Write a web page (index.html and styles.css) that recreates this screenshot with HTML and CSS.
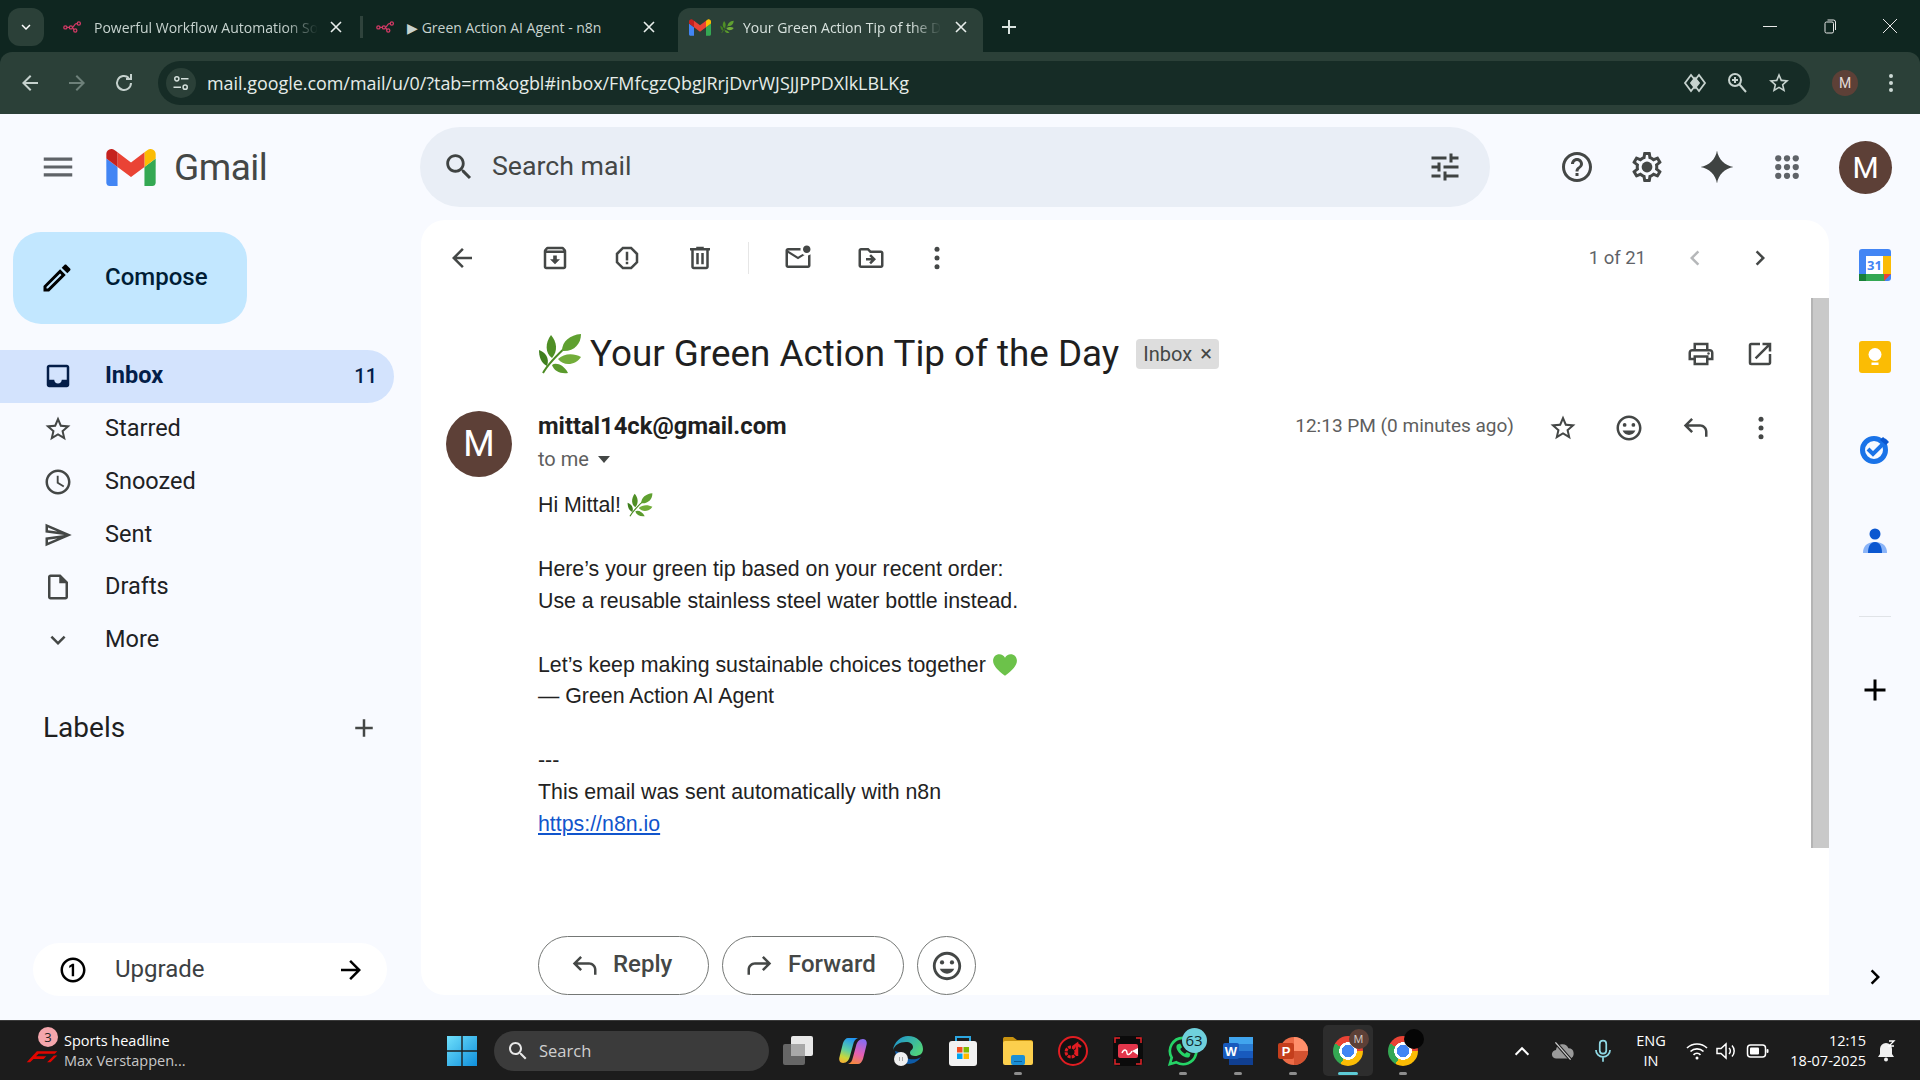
FILE: index.html
```html
<!DOCTYPE html>
<html lang="en">
<head>
    <meta charset="UTF-8">
    <meta name="viewport" content="width=device-width, initial-scale=1.0">
    <title>Your Green Action Tip of the Day - Gmail</title>
    <link rel="stylesheet" href="styles.css">
</head>
<body>

<svg class="sprite" xmlns="http://www.w3.org/2000/svg">
    <symbol id="i-menu" viewBox="0 0 24 24"><path d="M3 18h18v-2H3v2zm0-5h18v-2H3v2zm0-7v2h18V6H3z"/></symbol>
    <symbol id="i-search" viewBox="0 0 24 24"><path d="M15.5 14h-.79l-.28-.27C15.41 12.59 16 11.11 16 9.5 16 5.91 13.09 3 9.5 3S3 5.91 3 9.5 5.91 16 9.5 16c1.61 0 3.09-.59 4.23-1.57l.27.28v.79l5 4.99L20.49 19l-4.99-5zm-6 0C7.01 14 5 11.99 5 9.5S7.01 5 9.5 5 14 7.01 14 9.5 11.99 14 9.5 14z"/></symbol>
    <symbol id="i-tune" viewBox="0 0 24 24"><path d="M3 17v2h6v-2H3zM3 5v2h10V5H3zm10 16v-2h8v-2h-8v-2h-2v6h2zM7 9v2H3v2h4v2h2V9H7zm14 4v-2H11v2h10zm-6-4h2V7h4V5h-4V3h-2v6z"/></symbol>
    <symbol id="i-help" viewBox="0 0 24 24"><path d="M11 18h2v-2h-2v2zm1-16C6.48 2 2 6.48 2 12s4.48 10 10 10 10-4.48 10-10S17.52 2 12 2zm0 18c-4.41 0-8-3.59-8-8s3.59-8 8-8 8 3.59 8 8-3.59 8-8 8zm0-14c-2.21 0-4 1.79-4 4h2c0-1.1.9-2 2-2s2 .9 2 2c0 2-3 1.75-3 5h2c0-2.25 3-2.5 3-5 0-2.21-1.79-4-4-4z"/></symbol>
    <symbol id="i-gear" viewBox="0 0 24 24"><path d="M19.43 12.98c.04-.32.07-.64.07-.98 0-.34-.03-.66-.07-.98l2.11-1.65c.19-.15.24-.42.12-.64l-2-3.46c-.09-.16-.26-.25-.44-.25-.06 0-.12.01-.17.03l-2.49 1c-.52-.4-1.08-.73-1.69-.98l-.38-2.65C14.46 2.18 14.25 2 14 2h-4c-.25 0-.46.18-.49.42l-.38 2.65c-.61.25-1.17.59-1.69.98l-2.49-1c-.06-.02-.12-.03-.18-.03-.17 0-.34.09-.43.25l-2 3.46c-.13.22-.07.49.12.64l2.11 1.65c-.04.32-.07.65-.07.98 0 .33.03.66.07.98l-2.11 1.65c-.19.15-.24.42-.12.64l2 3.46c.09.16.26.25.44.25.06 0 .12-.01.17-.03l2.49-1c.52.4 1.08.73 1.69.98l.38 2.65c.03.24.24.42.49.42h4c.25 0 .46-.18.49-.42l.38-2.65c.61-.25 1.17-.59 1.69-.98l2.49 1c.06.02.12.03.18.03.17 0 .34-.09.43-.25l2-3.46c.12-.22.07-.49-.12-.64l-2.11-1.65zm-1.98-1.71c.04.31.05.52.05.73 0 .21-.02.43-.05.73l-.14 1.13.89.7 1.08.84-.7 1.21-1.27-.51-1.04-.42-.9.68c-.43.32-.84.56-1.25.73l-1.06.43-.16 1.13-.2 1.35h-1.4l-.19-1.35-.16-1.13-1.06-.43c-.43-.18-.83-.41-1.23-.71l-.91-.7-1.06.43-1.27.51-.7-1.21 1.08-.84.89-.7-.14-1.13c-.03-.31-.05-.54-.05-.74s.02-.43.05-.73l.14-1.13-.89-.7-1.08-.84.7-1.21 1.27.51 1.04.42.9-.68c.43-.32.84-.56 1.25-.73l1.06-.43.16-1.13.2-1.35h1.39l.19 1.35.16 1.13 1.06.43c.43.18.83.41 1.23.71l.91.7 1.06-.43 1.27-.51.7 1.21-1.07.85-.89.7.14 1.13z"/><circle cx="12" cy="12" r="3.6"/></symbol>
    <symbol id="i-spark" viewBox="0 0 24 24"><path d="M12 1C12.900 6.800 17.200 11.100 23 12 17.200 12.900 12.900 17.200 12 23 11.100 17.200 6.800 12.900 1 12 6.800 11.100 11.100 6.800 12 1z"/></symbol>
    <symbol id="i-apps" viewBox="0 0 24 24"><circle cx="5" cy="5" r="2.5"/><circle cx="12" cy="5" r="2.5"/><circle cx="19" cy="5" r="2.5"/><circle cx="5" cy="12" r="2.5"/><circle cx="12" cy="12" r="2.5"/><circle cx="19" cy="12" r="2.5"/><circle cx="5" cy="19" r="2.5"/><circle cx="12" cy="19" r="2.5"/><circle cx="19" cy="19" r="2.5"/></symbol>
    <symbol id="i-pencil" viewBox="0 0 24 24"><path d="M14.06 9.02l.92.92L5.92 19H5v-.92l9.06-9.06M17.66 3c-.25 0-.51.1-.7.29l-1.83 1.83 3.75 3.75 1.83-1.83c.39-.39.39-1.02 0-1.41l-2.34-2.34c-.2-.2-.45-.29-.71-.29zm-3.6 3.19L3 17.25V21h3.75L17.81 9.94l-3.75-3.75z"/></symbol>
    <symbol id="i-inbox" viewBox="0 0 24 24"><path d="M19 3H5c-1.1 0-2 .9-2 2v14c0 1.1.9 2 2 2h14c1.1 0 2-.9 2-2V5c0-1.1-.9-2-2-2zm0 12h-4c0 1.66-1.35 3-3 3s-3-1.34-3-3H4.99V5H19v10z"/></symbol>
    <symbol id="i-star" viewBox="0 0 24 24"><path d="M22 9.24l-7.19-.62L12 2 9.19 8.63 2 9.24l5.46 4.73L5.82 21 12 17.27 18.18 21l-1.63-7.03L22 9.24zM12 15.4l-3.76 2.27 1-4.28-3.32-2.88 4.38-.38L12 6.1l1.71 4.04 4.38.38-3.32 2.88 1 4.28L12 15.4z"/></symbol>
    <symbol id="i-clock" viewBox="0 0 24 24"><path d="M11.99 2C6.47 2 2 6.48 2 12s4.47 10 9.99 10C17.52 22 22 17.52 22 12S17.52 2 11.99 2zM12 20c-4.42 0-8-3.58-8-8s3.58-8 8-8 8 3.58 8 8-3.58 8-8 8zm.5-13H11v6l5.25 3.15.75-1.23-4.5-2.67z"/></symbol>
    <symbol id="i-send" viewBox="0 0 24 24"><path d="M4.01 6.03l7.51 3.22-7.52-1 .01-2.22m7.5 8.72L4 17.97v-2.22l7.51-1M2.01 3L2 10l15 2-15 2 .01 7L23 12 2.01 3z"/></symbol>
    <symbol id="i-draft" viewBox="0 0 24 24"><path d="M14 2H6c-1.1 0-1.99.9-1.99 2L4 20c0 1.1.89 2 1.99 2H18c1.1 0 2-.9 2-2V8l-6-6zM6 20V4h7v5h5v11H6z"/></symbol>
    <symbol id="i-down" viewBox="0 0 24 24"><path d="M16.59 8.59L12 13.17 7.41 8.59 6 10l6 6 6-6z"/></symbol>
    <symbol id="i-add" viewBox="0 0 24 24"><path d="M19 13h-6v6h-2v-6H5v-2h6V5h2v6h6v2z"/></symbol>
    <symbol id="i-back" viewBox="0 0 24 24"><path d="M20 11H7.83l5.59-5.59L12 4l-8 8 8 8 1.41-1.41L7.83 13H20v-2z"/></symbol>
    <symbol id="i-forward" viewBox="0 0 24 24"><path d="M12 4l-1.41 1.41L16.17 11H4v2h12.17l-5.58 5.59L12 20l8-8z"/></symbol>
    <symbol id="i-archive" viewBox="0 0 24 24"><path d="M20.54 5.23l-1.39-1.68C18.88 3.21 18.47 3 18 3H6c-.47 0-.88.21-1.16.55L3.46 5.23C3.17 5.57 3 6.02 3 6.5V19c0 1.1.9 2 2 2h14c1.1 0 2-.9 2-2V6.5c0-.48-.17-.93-.46-1.27zM6.24 5h11.52l.83 1H5.42l.82-1zM5 19V8h14v11H5zm8.45-9h-2.9v3H8l4 4 4-4h-2.55z"/></symbol>
    <symbol id="i-report" viewBox="0 0 24 24"><path d="M15.73 3H8.27L3 8.27v7.46L8.27 21h7.46L21 15.73V8.27L15.73 3zM19 14.9L14.9 19H9.1L5 14.9V9.1L9.1 5h5.8L19 9.1v5.8zM11 7h2v7h-2zM11 15h2v2h-2z"/></symbol>
    <symbol id="i-delete" viewBox="0 0 24 24"><path d="M15 4V3H9v1H4v2h1v13c0 1.1.9 2 2 2h10c1.1 0 2-.9 2-2V6h1V4h-5zm2 15H7V6h10v13zM9 8h2v9H9zm4 0h2v9h-2z"/></symbol>
    <symbol id="i-unread" viewBox="0 0 24 24"><path d="M22 8.98V18c0 1.1-.9 2-2 2H4c-1.1 0-2-.9-2-2V6c0-1.1.9-2 2-2h10.1c-.06.32-.1.66-.1 1 0 .34.04.68.1 1H4l8 5 3.67-2.29c.47.43 1.02.76 1.63.98L12 13 4 8v10h16V9.9c.74-.15 1.42-.48 2-.92zM16 5c0 1.66 1.34 3 3 3s3-1.34 3-3-1.34-3-3-3-3 1.34-3 3z"/></symbol>
    <symbol id="i-move" viewBox="0 0 24 24"><path d="M20 6h-8l-2-2H4c-1.1 0-1.99.9-1.99 2L2 18c0 1.1.9 2 2 2h16c1.1 0 2-.9 2-2V8c0-1.1-.9-2-2-2zm0 12H4V6h5.17l2 2H20v10zm-8.01-9l-1.41 1.41L12.16 12H8v2h4.16l-1.59 1.59L11.99 17 16 13.01 11.99 9z"/></symbol>
    <symbol id="i-more" viewBox="0 0 24 24"><circle cx="12" cy="5" r="2"/><circle cx="12" cy="12" r="2"/><circle cx="12" cy="19" r="2"/></symbol>
    <symbol id="i-left" viewBox="0 0 24 24"><path d="M15.41 7.41L14 6l-6 6 6 6 1.41-1.41L10.83 12z"/></symbol>
    <symbol id="i-right" viewBox="0 0 24 24"><path d="M10 6L8.59 7.41 13.17 12l-4.58 4.59L10 18l6-6z"/></symbol>
    <symbol id="i-print" viewBox="0 0 24 24"><path d="M19 8h-1V3H6v5H5c-1.66 0-3 1.34-3 3v6h4v4h12v-4h4v-6c0-1.66-1.34-3-3-3zM8 5h8v3H8V5zm8 12v2H8v-4h8v2zm2-2v-2H6v2H4v-4c0-.55.45-1 1-1h14c.55 0 1 .45 1 1v4h-2z"/><circle cx="18" cy="11.5" r="1"/></symbol>
    <symbol id="i-open" viewBox="0 0 24 24"><path d="M19 19H5V5h7V3H5a2 2 0 0 0-2 2v14a2 2 0 0 0 2 2h14c1.1 0 2-.9 2-2v-7h-2v7zM14 3v2h3.59l-9.83 9.83 1.41 1.41L19 6.41V10h2V3h-7z"/></symbol>
    <symbol id="i-smile" viewBox="0 0 24 24"><path d="M12 2C6.47 2 2 6.5 2 12s4.47 10 10 10 10-4.5 10-10S17.53 2 12 2zm0 18c-4.42 0-8-3.58-8-8s3.58-8 8-8 8 3.58 8 8-3.58 8-8 8z"/><circle cx="8.5" cy="9.5" r="1.5"/><circle cx="15.5" cy="9.5" r="1.5"/><path d="M12 17.5c2.33 0 4.3-1.46 5.11-3.5H6.89c.8 2.04 2.78 3.5 5.11 3.5z"/></symbol>
    <symbol id="i-reply" viewBox="0 0 24 24"><path d="M20 19v-4c0-2.21-1.79-4-4-4H6.83l3.59 3.59L9 16l-6-6 6-6 1.41 1.41L6.83 9H16c3.31 0 6 2.69 6 6v4h-2z"/></symbol>
    <symbol id="i-fwd" viewBox="0 0 24 24"><path d="M4 19v-4c0-2.21 1.79-4 4-4h9.17l-3.59 3.59L15 16l6-6-6-6-1.41 1.41L17.17 9H8c-3.31 0-6 2.69-6 6v4h2z"/></symbol>
    <symbol id="i-caret" viewBox="0 0 24 24"><path d="M6 9l6 7 6-7z"/></symbol>
    <symbol id="i-one" viewBox="0 0 24 24"><path d="M12 2C6.48 2 2 6.48 2 12s4.48 10 10 10 10-4.48 10-10S17.52 2 12 2zm0 18c-4.41 0-8-3.59-8-8s3.59-8 8-8 8 3.59 8 8-3.59 8-8 8z"/><path d="M12.9 7h-1.5L9 8.6v1.7l2-1.1V17h1.9z"/></symbol>
    <symbol id="i-herb" viewBox="0 0 44 42">
        <path d="M5 40C10 31 18 23 30 12" fill="none" stroke="#4b8a22" stroke-width="2"/>
        <path fill="#5fa030" d="M24 18C24 8 32 2 43 1 43 11 36 19 24 18z"/>
        <path fill="#4f8f25" d="M14 25C7 20 7 10 13 2 19 9 20 18 14 25z"/>
        <path fill="#72ad3a" d="M20 26C26 20 36 20 43 24 38 32 26 34 20 26z"/>
        <path fill="#3f7f1e" d="M9 33C3 30 1 24 1 17 7 19 12 25 9 33z"/>
        <path fill="#5a9a2c" d="M14 32C18 29 26 32 30 40 22 41 16 38 14 32z"/>
    </symbol>
    <symbol id="i-n8n" viewBox="0 0 24 16">
        <g fill="none" stroke="#d43a66" stroke-width="1.6">
            <circle cx="3" cy="8.5" r="2"/><circle cx="10" cy="8.5" r="2"/><circle cx="15.5" cy="12.5" r="2"/><circle cx="20" cy="3.5" r="2"/>
            <path d="M5 8.5h3M12 8.5c2 0 1.5-5 6-5M12 8.5c1 0 1 2.5 1.8 3"/>
        </g>
    </symbol>
    <symbol id="i-gmail" viewBox="52 42 88 66">
        <path fill="#4285f4" d="M58 108h14V74L52 59v43c0 3.32 2.69 6 6 6"/>
        <path fill="#34a853" d="M120 108h14c3.32 0 6-2.69 6-6V59l-20 15"/>
        <path fill="#fbbc04" d="M120 48v26l20-15v-8c0-7.42-8.47-11.65-14.4-7.2"/>
        <path fill="#ea4335" d="M72 74V48l24 18 24-18v26L96 92"/>
        <path fill="#c5221f" d="M52 51v8l20 15V48l-5.6-4.2c-5.94-4.45-14.4-.22-14.4 7.2"/>
    </symbol>
</svg>

<!-- browser chrome -->
<div class="tabstrip">
    <button class="tab-list"><svg class="ic ic-18"><use href="#i-down"/></svg></button>
    <div class="tab tab-one">
        <svg class="favicon"><use href="#i-n8n"/></svg>
        <span class="tab-title">Powerful Workflow Automation So</span>
        <svg class="tab-close" viewBox="0 0 14 14"><path d="M2 2l10 10M12 2L2 12"/></svg>
    </div>
    <div class="tab-sep"></div>
    <div class="tab tab-two">
        <svg class="favicon"><use href="#i-n8n"/></svg>
        <span class="tab-title">▶ Green Action AI Agent - n8n</span>
        <svg class="tab-close" viewBox="0 0 14 14"><path d="M2 2l10 10M12 2L2 12"/></svg>
    </div>
    <div class="tab tab-active">
        <svg class="tab-gmail"><use href="#i-gmail"/></svg>
        <svg class="tab-herb"><use href="#i-herb"/></svg>
        <span class="tab-title">Your Green Action Tip of the D</span>
        <svg class="tab-close" viewBox="0 0 14 14"><path d="M2 2l10 10M12 2L2 12"/></svg>
    </div>
    <svg class="ic ic-24 new-tab"><use href="#i-add"/></svg>
    <div class="window-btns">
        <svg viewBox="0 0 16 16"><path d="M1 8.500h14"/></svg>
        <svg viewBox="0 0 16 16"><rect x="3" y="4" width="8.500" height="11" rx="1.500"/><path d="M5.500 2h6a2 2 0 0 1 2 2v8"/></svg>
        <svg viewBox="0 0 16 16"><path d="M1 1l14 14M15 1L1 15"/></svg>
    </div>
</div>

<div class="toolbar">
    <svg class="ic nav-btn"><use href="#i-back"/></svg>
    <svg class="ic nav-btn nav-off"><use href="#i-forward"/></svg>
    <svg class="nav-btn reload" viewBox="0 0 24 24"><path d="M19 12a7 7 0 1 1-2.200-5.100M19 3v5h-5" fill="none" stroke="currentColor" stroke-width="2"/></svg>
    <div class="omnibox">
        <span class="site-chip">
            <svg viewBox="0 0 24 24" width="20" height="20" fill="none" stroke="#d5e0dc" stroke-width="1.800"><circle cx="7" cy="7" r="2.500"/><path d="M12 7h9M3 17h9"/><circle cx="17" cy="17" r="2.500"/></svg>
        </span>
        <span class="url">mail.google.com/mail/u/0/?tab=rm&amp;ogbl#inbox/FMfcgzQbgJRrjDvrWJSJJPPDXlkLBLKg</span>
        <span class="omni-icons">
            <svg viewBox="0 0 24 24" width="24" height="24" fill="none" stroke="#c6d2ce" stroke-width="1.800"><path d="M8 4l-6 8 6 8 4-5 4 5 6-8-6-8-4 5z"/><path d="M12 7l4 5-4 5-4-5z" fill="#c6d2ce"/></svg>
            <svg viewBox="0 0 24 24" width="24" height="24" fill="none" stroke="#c6d2ce" stroke-width="2"><circle cx="10" cy="9" r="6"/><path d="M14.500 13.500L21 21M10 6v6M7 9h6"/></svg>
            <svg class="ic ic-24 omni-star"><use href="#i-star"/></svg>
        </span>
    </div>
    <span class="browser-avatar">M</span>
    <svg class="ic ic-24 browser-menu"><use href="#i-more"/></svg>
</div>

<!-- gmail -->
<div class="gmail">
    <header class="gm-header">
        <div class="gm-brand">
            <svg class="gm-menu"><use href="#i-menu"/></svg>
            <svg class="gm-logo"><use href="#i-gmail"/></svg>
            <span class="gm-word">Gmail</span>
        </div>
        <div class="searchbar">
            <svg class="ic ic-34 dark"><use href="#i-search"/></svg>
            <span class="search-text">Search mail</span>
            <svg class="ic ic-36 dark search-tune"><use href="#i-tune"/></svg>
        </div>
        <div class="gm-actions">
            <svg class="ic ic-36"><use href="#i-help"/></svg>
            <svg class="ic ic-36"><use href="#i-gear"/></svg>
            <svg class="ic ic-36 dark"><use href="#i-spark"/></svg>
            <svg class="ic ic-36 apps"><use href="#i-apps"/></svg>
            <span class="avatar avatar-top">M</span>
        </div>
    </header>

    <div class="gm-body">
        <aside class="sidebar">
            <button class="compose"><svg class="ic ic-36 black"><use href="#i-pencil"/></svg><span>Compose</span></button>
            <nav class="nav-list">
                <a class="nav-row nav-current"><svg class="ic ic-30"><use href="#i-inbox"/></svg><span>Inbox</span><b class="nav-count">11</b></a>
                <a class="nav-row"><svg class="ic ic-30"><use href="#i-star"/></svg><span>Starred</span></a>
                <a class="nav-row"><svg class="ic ic-30"><use href="#i-clock"/></svg><span>Snoozed</span></a>
                <a class="nav-row"><svg class="ic ic-30"><use href="#i-send"/></svg><span>Sent</span></a>
                <a class="nav-row"><svg class="ic ic-30"><use href="#i-draft"/></svg><span>Drafts</span></a>
                <a class="nav-row"><svg class="ic ic-30"><use href="#i-down"/></svg><span>More</span></a>
            </nav>
            <div class="labels-head"><span>Labels</span><svg class="ic ic-30"><use href="#i-add"/></svg></div>
            <div class="upgrade">
                <svg class="ic ic-30 black"><use href="#i-one"/></svg>
                <span>Upgrade</span>
                <svg class="ic ic-30 black upgrade-arrow"><use href="#i-forward"/></svg>
            </div>
        </aside>

        <main class="panel">
            <div class="mail-tools">
                <span class="tool"><svg class="ic ic-30"><use href="#i-back"/></svg></span>
                <span class="tool tool-group"><svg class="ic ic-30"><use href="#i-archive"/></svg></span>
                <span class="tool"><svg class="ic ic-30"><use href="#i-report"/></svg></span>
                <span class="tool"><svg class="ic ic-30"><use href="#i-delete"/></svg></span>
                <span class="tool-divider"></span>
                <span class="tool"><svg class="ic ic-30"><use href="#i-unread"/></svg></span>
                <span class="tool"><svg class="ic ic-30"><use href="#i-move"/></svg></span>
                <span class="tool tool-narrow"><svg class="ic ic-30"><use href="#i-more"/></svg></span>
                <div class="pager">
                    <span class="pager-text">1 of 21</span>
                    <svg class="ic ic-30 pager-off"><use href="#i-left"/></svg>
                    <svg class="ic ic-30"><use href="#i-right"/></svg>
                </div>
            </div>

            <div class="subject-row">
                <svg class="subject-herb"><use href="#i-herb"/></svg>
                <h1 class="subject">Your Green Action Tip of the Day</h1>
                <span class="label-chip">Inbox <i>×</i></span>
                <span class="subject-actions">
                    <svg class="ic ic-30"><use href="#i-print"/></svg>
                    <svg class="ic ic-30"><use href="#i-open"/></svg>
                </span>
            </div>

            <div class="msg-head">
                <span class="avatar avatar-msg">M</span>
                <div class="msg-who">
                    <div class="sender">mittal14ck@gmail.com</div>
                    <div class="to-me">to me <svg class="ic ic-24"><use href="#i-caret"/></svg></div>
                </div>
                <div class="msg-meta">
                    <span class="msg-time">12:13 PM (0 minutes ago)</span>
                    <span class="msg-icons">
                        <svg class="ic ic-30"><use href="#i-star"/></svg>
                        <svg class="ic ic-30"><use href="#i-smile"/></svg>
                        <svg class="ic ic-30"><use href="#i-reply"/></svg>
                        <svg class="ic ic-30"><use href="#i-more"/></svg>
                    </span>
                </div>
            </div>

            <div class="msg-body">
                <p>Hi Mittal! <svg class="emoji"><use href="#i-herb"/></svg></p>
                <p>Here’s your green tip based on your recent order:<br>Use a reusable stainless steel water bottle instead.</p>
                <p>Let’s keep making sustainable choices together <svg class="emoji" viewBox="0 0 24 24"><path fill="#6cc24a" d="M12 22C5 16.500 1 12.500 1 8c0-3.500 2.600-6 5.800-6C9 2 11 3.200 12 5.200 13 3.200 15 2 17.200 2 20.400 2 23 4.500 23 8c0 4.500-4 8.500-11 14z"/></svg><br>— Green Action AI Agent</p>
                <p>---<br>This email was sent automatically with n8n<br><a href="#">https://n8n.io</a></p>
            </div>

            <div class="msg-buttons">
                <button class="pill"><svg class="ic ic-30"><use href="#i-reply"/></svg><span>Reply</span></button>
                <button class="pill pill-fwd"><svg class="ic ic-30"><use href="#i-fwd"/></svg><span>Forward</span></button>
                <button class="pill pill-round"><svg class="ic ic-34"><use href="#i-smile"/></svg></button>
            </div>

            <div class="scroll-thumb"></div>
        </main>

        <aside class="rail">
            <svg class="rail-app" viewBox="0 0 32 32">
                <rect width="32" height="32" rx="3" fill="#4285f4"/>
                <rect x="24" y="7" width="8" height="18" fill="#fbbc04"/>
                <rect y="25" width="26" height="7" fill="#34a853"/>
                <rect y="25" width="7" height="7" fill="#188038"/>
                <path d="M25 25h7l-7 7z" fill="#ea4335"/>
                <rect x="7" y="7" width="17" height="18" fill="#fff"/>
                <text x="15.500" y="21" class="cal-num">31</text>
            </svg>
            <svg class="rail-app" viewBox="0 0 32 32">
                <rect width="32" height="32" rx="3" fill="#fbbc04"/>
                <circle cx="16" cy="13.500" r="6.500" fill="#fff"/>
                <rect x="12.500" y="21.500" width="7" height="2.500" fill="#fff"/>
            </svg>
            <svg class="rail-app" viewBox="0 0 32 32">
                <circle cx="15" cy="17" r="11.500" fill="none" stroke="#1a73e8" stroke-width="5"/>
                <path d="M9 16l5 5 14-14" fill="none" stroke="#1a73e8" stroke-width="4"/>
                <path d="M24 4l6 5-3 3-6-5z" fill="#0b57d0"/>
            </svg>
            <svg class="rail-app" viewBox="0 0 32 32">
                <circle cx="16" cy="9" r="5.500" fill="#0b57d0"/>
                <path d="M4 28c0-6 3-11 12-11s12 5 12 11z" fill="#8ab4f8"/>
                <path d="M9 28c0-6 2-11 7-11s7 5 7 11z" fill="#0b57d0"/>
            </svg>
            <div class="rail-divider"></div>
            <svg class="ic ic-36 black"><use href="#i-add"/></svg>
            <svg class="ic ic-30 black rail-toggle"><use href="#i-right"/></svg>
        </aside>
    </div>
</div>

<!-- windows taskbar -->
<footer class="taskbar">
    <div class="news">
        <svg class="f1" viewBox="0 0 40 20"><path fill="#e10600" d="M2 18L14 5h24l-3 3H16l-3 3h12l-3 3H10l-4 4zM26 18l8-8h4l-8 8z"/></svg>
        <span class="news-badge">3</span>
        <div class="news-text">
            <div>Sports headline</div>
            <div class="news-sub">Max Verstappen...</div>
        </div>
    </div>
    <svg class="win-logo" viewBox="0 0 30 30">
        <defs><linearGradient id="win" x1="0" y1="0" x2="1" y2="1"><stop offset="0" stop-color="#6fe0fb"/><stop offset="1" stop-color="#0f8fdc"/></linearGradient></defs>
        <path fill="url(#win)" d="M0 0h14.300v14.300H0zM15.700 0H30v14.300H15.700zM0 15.700h14.300V30H0zM15.700 15.700H30V30H15.700z"/>
    </svg>
    <div class="task-search">
        <svg class="ic ic-24"><use href="#i-search"/></svg>
        <span>Search</span>
    </div>
    <div class="tiles">
        <div class="tile"><svg viewBox="0 0 30 30"><rect y="8" width="22" height="21" rx="2" fill="#666"/><rect x="8" y="0" width="22" height="20" rx="2" fill="#e8e8e8"/><rect x="8" y="8" width="14" height="12" fill="#a8a8a8"/></svg></div>
        <div class="tile"><svg viewBox="0 0 30 26">
            <defs>
                <linearGradient id="copl" x1="0.6" y1="0" x2="0.3" y2="1"><stop offset="0" stop-color="#2196f3"/><stop offset=".5" stop-color="#5fd0a0"/><stop offset=".8" stop-color="#c9d63a"/><stop offset="1" stop-color="#f5b335"/></linearGradient>
                <linearGradient id="copr" x1="0.6" y1="0" x2="0.3" y2="1"><stop offset="0" stop-color="#8a6cf0"/><stop offset=".55" stop-color="#e65fb4"/><stop offset="1" stop-color="#f58a3c"/></linearGradient>
            </defs>
            <path fill="url(#copl)" d="M10 0h10c-3 1-4 3-5 7l-3 11c-1 4-3 7-7 7-3 0-4.500-3-3.500-6L5 5c1-3 3-5 5-5z"/>
            <path fill="url(#copr)" d="M20 26H10c3-1 4-3 5-7l3-11c1-4 3-7 7-7 3 0 4.500 3 3.500 6L25 21c-1 3-3 5-5 5z"/>
        </svg></div>
        <div class="tile"><svg viewBox="0 0 30 30">
            <defs><linearGradient id="edge" x1="0" y1="0" x2="1" y2="0.6"><stop offset="0" stop-color="#1a8fd8"/><stop offset="1" stop-color="#4fd17c"/></linearGradient></defs>
            <path fill="#0d5ba8" d="M2 15a14 14 0 0 0 26 6c-6 4-16 3-19-4z"/>
            <path fill="url(#edge)" d="M0 14C1 6 8 0 15 0c9 0 15 6 15 13 0 5-4 7-8 7-3 0-5-1-5-3 0-3 3-3 3-6 0-3-3-5-7-5C6 6 2 9 0 14z"/>
            <circle cx="8" cy="23" r="7" fill="#f0f0f0"/>
            <path d="M6.500 21v4M9.500 21v4" stroke="#a8a8a8" stroke-width="1"/>
        </svg></div>
        <div class="tile"><svg viewBox="0 0 30 30"><path d="M8 5V1h14v4" fill="none" stroke="#2ca6e0" stroke-width="2"/><rect x="1" y="5" width="28" height="25" rx="3" fill="#f2f2f2"/><rect x="9" y="11" width="5.500" height="5.500" fill="#f25022"/><rect x="15.500" y="11" width="5.500" height="5.500" fill="#7fba00"/><rect x="9" y="17.500" width="5.500" height="5.500" fill="#00a4ef"/><rect x="15.500" y="17.500" width="5.500" height="5.500" fill="#ffb900"/></svg></div>
        <div class="tile tile-open"><svg viewBox="0 0 30 30"><path fill="#c8920f" d="M0 3c0-1.500 1-2 2-2h8l4 3h14c1 0 2 1 2 2v6H0z"/><rect y="5" width="30" height="24" rx="2" fill="#fccf4d"/><rect x="8" y="19" width="14" height="10" rx="2" fill="#1b8fd6"/><rect x="11" y="25" width="8" height="1" fill="#0b5d94"/></svg></div>
        <div class="tile"><svg viewBox="0 0 30 30"><circle cx="15" cy="15" r="14" fill="#111" stroke="#e11d22" stroke-width="2"/><circle cx="13" cy="16" r="5" fill="none" stroke="#e11d22" stroke-width="3" stroke-dasharray="3 1"/><path d="M19 20V8l-4 3m4-3l4 3" fill="none" stroke="#e11d22" stroke-width="2.500"/></svg></div>
        <div class="tile"><svg viewBox="0 0 30 30"><rect width="30" height="30" rx="5" fill="#0b0b0b"/><rect x="5" y="8" width="20" height="14" rx="2" fill="#e2364b"/><path d="M9 17c2-5 5-3 5 0s4 1 5-2" fill="none" stroke="#fff" stroke-width="1.500"/><path d="M19 15l6-3v7z" fill="#fff"/><path d="M2 7V2h5M23 2h5v5M2 23v5h5M28 23v5h-5" fill="none" stroke="#e2242a" stroke-width="1.500"/></svg></div>
        <div class="tile tile-open">
            <svg class="wa-ico" viewBox="0 0 34 34"><path d="M17 3a14 14 0 0 0-12 21L3 31l7-2a14 14 0 1 0 7-26z" fill="none" stroke="#25d366" stroke-width="2.800"/><path d="M11 10c-2 2-1 6 3 10s8 5 10 3l1-3-4-2-2 2c-2-1-4-3-5-5l2-2-2-4z" fill="#25d366"/></svg>
            <span class="tile-badge">63</span>
        </div>
        <div class="tile tile-open"><svg viewBox="0 0 30 30"><rect x="6" y="1" width="24" height="28" rx="2" fill="#2b7cd3"/><rect x="6" y="1" width="24" height="7" fill="#41a5ee"/><rect x="6" y="15" width="24" height="7" fill="#185abd"/><rect x="6" y="22" width="24" height="7" fill="#103f91"/><rect y="7" width="16" height="16" rx="2" fill="#185abd"/><text x="8" y="20" class="ico-letter">W</text></svg></div>
        <div class="tile tile-open"><svg viewBox="0 0 30 30"><circle cx="16" cy="15" r="14" fill="#ed6c47"/><path d="M16 1a14 14 0 0 1 14 14H16z" fill="#ff8f6b"/><path d="M16 15h14a14 14 0 0 1-14 14z" fill="#d35230"/><rect y="7" width="16" height="16" rx="2" fill="#c43e1c"/><text x="8" y="20" class="ico-letter">P</text></svg></div>
        <div class="tile tile-current">
            <span class="chrome-ico"></span>
            <span class="chrome-badge">M</span>
        </div>
        <div class="tile tile-open">
            <span class="chrome-ico"></span>
            <span class="chrome-badge chrome-badge-dark"></span>
        </div>
    </div>
    <div class="tray">
        <svg class="tray-up" viewBox="0 0 24 24" width="22" height="22"><path d="M5 16l7-7 7 7" fill="none" stroke="#fff" stroke-width="2.200"/></svg>
        <svg class="tray-cloud" viewBox="0 0 24 24" width="26" height="26"><path d="M6 19a4 4 0 0 1-.5-8 6 6 0 0 1 11.500-1.500 4.800 4.800 0 0 1 1 9.500z" fill="#9a9a9a"/><path d="M5 4l14 16" stroke="#1c1c1c" stroke-width="3"/><path d="M5 4l14 16" stroke="#cfcfcf" stroke-width="1.200"/></svg>
        <svg class="tray-mic" viewBox="0 0 24 24" width="26" height="26" fill="none" stroke="#8fd8e4" stroke-width="1.600"><rect x="9" y="2.500" width="6" height="12" rx="3"/><path d="M5.500 11a6.500 6.500 0 0 0 13 0M12 17.500V22"/></svg>
        <div class="tray-lang">ENG<br>IN</div>
        <svg class="tray-net" viewBox="0 0 24 24" width="24" height="24" fill="none" stroke="#fff" stroke-width="1.700"><path d="M2 9a14.500 14.500 0 0 1 20 0M5.500 12.500a9.500 9.500 0 0 1 13 0M8.500 15.800a5 5 0 0 1 7 0"/><circle cx="12" cy="19" r="1.500" fill="#fff" stroke="none"/></svg>
        <svg class="tray-sound" viewBox="0 0 24 24" width="24" height="24" fill="none" stroke="#fff" stroke-width="1.500"><path d="M3 9.500v5h4l5 4.500V5L7 9.500zM15 9a4 4 0 0 1 0 6M18 6.500a8 8 0 0 1 0 11"/></svg>
        <svg class="tray-batt" viewBox="0 0 24 24" width="24" height="24"><rect x="1.500" y="6" width="18" height="12" rx="3" fill="none" stroke="#fff" stroke-width="1.500"/><rect x="4" y="8.500" width="9" height="7" rx="1" fill="#fff"/><rect x="20.500" y="10" width="2" height="4" rx="1" fill="#fff"/></svg>
        <div class="tray-clock">12:15<br>18-07-2025</div>
        <svg class="tray-bell" viewBox="0 0 24 24" width="24" height="24"><path d="M12 4a6 6 0 0 0-6 6v5l-2 3h16l-2-3v-5a6 6 0 0 0-6-6z" fill="#f0f0f0"/><circle cx="12" cy="20.500" r="2" fill="#f0f0f0"/><path d="M15 2h5l-5 5h5" fill="none" stroke="#fff" stroke-width="1.300"/></svg>
    </div>
</footer>

</body>
</html>
```

FILE: styles.css
```css
* {
    box-sizing: border-box;
}

html, body {
    height: 100%;
}

body {
    margin: 0;
    width: 1920px;
    height: 1080px;
    overflow: hidden;
    display: flex;
    flex-direction: column;
    font-family: Roboto, "Liberation Sans", sans-serif;
    background-color: #0f2620;
}

.sprite {
    display: none;
}

button {
    font-family: inherit;
    border: none;
    padding: 0;
}

.ic {
    fill: #444746;
    flex-shrink: 0;
}

.ic.black { fill: #000; }
.ic.dark { fill: #3f4342; }
.ic-18 { width: 18px; height: 18px; }
.ic-20 { width: 20px; height: 20px; }
.ic-24 { width: 24px; height: 24px; }
.ic-30 { width: 30px; height: 30px; }
.ic-34 { width: 34px; height: 34px; }
.ic-36 { width: 36px; height: 36px; }

/* tab strip */
.tabstrip {
    height: 52px;
    display: flex;
    align-items: flex-end;
    padding-left: 8px;
    color: #c7d3cf;
    font-family: "Open Sans", sans-serif;
    font-size: 14px;
}

.tab-list {
    width: 36px;
    height: 38px;
    margin-bottom: 6px;
    margin-right: 8px;
    border-radius: 12px;
    background-color: #2b4038;
    display: flex;
    align-items: center;
    justify-content: center;
}

.tab-list .ic {
    fill: #fff;
}

.tab {
    height: 44px;
    display: flex;
    align-items: center;
    gap: 12px;
    padding-bottom: 6px;
}

.tab-one {
    width: 308px;
    padding-left: 11px;
    padding-right: 14px;
    gap: 8px;
}

.tab-one .favicon {
    margin-right: 4px;
}

.tab-two {
    width: 315px;
    padding-left: 13px;
    padding-right: 19px;
}

.tab-active {
    width: 305px;
    padding-left: 11px;
    padding-right: 12px;
    background-color: #2b4038;
    border-radius: 12px 12px 0 0;
    color: #d8e2de;
    gap: 9px;
}

.favicon {
    width: 19px;
    height: 14px;
    flex-shrink: 0;
}

.tab-gmail {
    width: 22px;
    height: 17px;
    flex-shrink: 0;
}

.tab-herb {
    width: 14px;
    height: 14px;
    flex-shrink: 0;
}

.tab-title {
    white-space: nowrap;
    -webkit-mask-image: linear-gradient(to right, #000 85%, transparent 100%);
    mask-image: linear-gradient(to right, #000 85%, transparent 100%);
}

.tab-two .tab-title {
    -webkit-mask-image: none;
    mask-image: none;
}

.tab-close {
    width: 20px;
    height: 14px;
    margin-left: auto;
    flex-shrink: 0;
    fill: none;
    stroke: #e8eeec;
    stroke-width: 1.6;
}

.tab-sep {
    width: 3px;
    height: 22px;
    margin-bottom: 14px;
    background-color: #2f433c;
}

.new-tab {
    fill: #d9e3df;
    margin-left: 14px;
    margin-bottom: 13px;
}

.window-btns {
    margin-left: auto;
    height: 52px;
    padding-right: 22px;
    display: flex;
    align-items: center;
    gap: 44px;
}

.window-btns svg {
    width: 16px;
    height: 16px;
    fill: none;
    stroke: #e8e8e8;
    stroke-width: 1;
}

/* toolbar */
.toolbar {
    height: 62px;
    display: flex;
    align-items: center;
    padding-left: 6px;
    padding-right: 17px;
    background-color: #2b4038;
    border-radius: 12px 12px 0 0;
}

.nav-btn {
    width: 24px;
    height: 24px;
    margin: 0 11.5px;
    fill: #c5d1cd;
    color: #c5d1cd;
}

.nav-off {
    fill: #6e817a;
}

.omnibox {
    flex: 1;
    height: 44px;
    margin-left: 11px;
    display: flex;
    align-items: center;
    gap: 11px;
    padding-left: 8px;
    padding-right: 19px;
    border-radius: 22px;
    background-color: #162c26;
}

.site-chip {
    width: 30px;
    height: 30px;
    border-radius: 50%;
    background-color: #2b4038;
    display: flex;
    align-items: center;
    justify-content: center;
}

.url {
    font-family: "Open Sans", sans-serif;
    font-size: 17.9px;
    color: #e6ece9;
    white-space: nowrap;
}

.omni-icons {
    margin-left: auto;
    display: flex;
    align-items: center;
    gap: 18px;
}

.omni-star {
    fill: #c6d2ce;
}

.browser-avatar {
    width: 26px;
    height: 26px;
    margin-left: 22px;
    border-radius: 50%;
    background-color: #5d4037;
    color: #e4dcd9;
    font-size: 14px;
    display: flex;
    align-items: center;
    justify-content: center;
}

.browser-menu {
    fill: #cdd9d5;
    margin-left: 21px;
}

/* gmail shell */
.gmail {
    flex: 1;
    min-height: 0;
    display: flex;
    flex-direction: column;
    background-color: #f8faff;
}

.gm-header {
    height: 106px;
    flex-shrink: 0;
    display: flex;
    align-items: center;
}

.gm-brand {
    width: 420px;
    display: flex;
    align-items: center;
    padding-left: 39px;
}

.gm-menu {
    width: 38px;
    height: 38px;
    fill: #5f6368;
}

.gm-logo {
    width: 50px;
    height: 37px;
    margin-left: 29px;
}

.gm-word {
    margin-left: 18px;
    font-size: 37px;
    color: #444746;
    letter-spacing: -0.5px;
}

.searchbar {
    width: 1070px;
    height: 80px;
    padding-left: 22px;
    padding-right: 27px;
    border-radius: 40px;
    background-color: #e9eef6;
    display: flex;
    align-items: center;
    gap: 16px;
}

.search-text {
    font-size: 26.7px;
    color: #444746;
    padding-bottom: 2px;
}

.search-tune {
    margin-left: auto;
}

.gm-actions {
    margin-left: 69px;
    display: flex;
    align-items: center;
    gap: 34px;
}

.apps {
    fill: #5f6368;
    padding: 3px;
}

.avatar {
    border-radius: 50%;
    background-color: #5d4037;
    color: #fff;
    display: flex;
    align-items: center;
    justify-content: center;
    flex-shrink: 0;
}

.avatar-top {
    width: 53px;
    height: 53px;
    font-size: 30px;
}

.gm-body {
    flex: 1;
    min-height: 0;
    display: flex;
}

/* sidebar */
.sidebar {
    width: 421px;
    flex-shrink: 0;
    display: flex;
    flex-direction: column;
    padding-top: 12px;
    padding-bottom: 24px;
}

.compose {
    width: 234px;
    height: 92px;
    margin-left: 13px;
    padding-left: 26px;
    border-radius: 28px;
    background-color: #c2e7ff;
    color: #001d35;
    font-size: 24px;
    font-weight: 500;
    display: flex;
    align-items: center;
    gap: 30px;
    text-align: left;
}

.compose span {
    padding-bottom: 2px;
}

.nav-list {
    margin-top: 26px;
}

.nav-row {
    width: 394px;
    height: 52.75px;
    padding-left: 43px;
    padding-right: 17px;
    display: flex;
    align-items: center;
    gap: 32px;
    border-radius: 0 27px 27px 0;
    font-size: 23.5px;
    color: #202124;
}

.nav-row span {
    padding-bottom: 2px;
}

.nav-current {
    background-color: #d3e3fd;
    color: #041e49;
    font-weight: 700;
}

.nav-current .ic {
    fill: #041e49;
}

.nav-count {
    margin-left: auto;
    font-size: 20px;
    font-weight: 500;
}

.labels-head {
    height: 40px;
    margin-top: 41px;
    padding-left: 43px;
    width: 379px;
    display: flex;
    align-items: center;
    justify-content: space-between;
    font-size: 28px;
    color: #1f1f1f;
}

.upgrade {
    width: 354px;
    height: 53px;
    margin-top: auto;
    margin-left: 33px;
    padding-left: 25px;
    padding-right: 21px;
    border-radius: 27px;
    background-color: #fff;
    display: flex;
    align-items: center;
    gap: 27px;
    font-size: 24px;
    color: #3c4043;
}

.upgrade span {
    padding-bottom: 2px;
}

.upgrade-arrow {
    margin-left: auto;
}

/* message panel */
.panel {
    position: relative;
    flex: 1;
    min-width: 0;
    margin-bottom: 25px;
    border-radius: 24px 24px 0 24px;
    background-color: #fff;
    display: flex;
    flex-direction: column;
}

.mail-tools {
    height: 76px;
    flex-shrink: 0;
    padding-left: 5px;
    display: flex;
    align-items: center;
}

.tool {
    width: 72.5px;
    display: flex;
    justify-content: center;
}

.tool-group {
    margin-left: 20px;
}

.tool-narrow {
    width: 60px;
}

.tool-divider {
    width: 1px;
    height: 32px;
    margin-left: 12px;
    margin-right: 13px;
    background-color: #e6e6e6;
}

.pager {
    margin-left: auto;
    padding-right: 54px;
    display: flex;
    align-items: center;
    font-size: 18.5px;
    color: #5f6368;
    white-space: nowrap;
}

.pager-text {
    margin-right: 34px;
}

.pager-off {
    fill: #b5b7b9;
    margin-right: 35px;
}

.subject-row {
    height: 115px;
    flex-shrink: 0;
    padding-left: 117px;
    padding-right: 54px;
    display: flex;
    align-items: center;
}

.subject-herb {
    width: 44px;
    height: 42px;
    margin-right: 8px;
    flex-shrink: 0;
}

.subject {
    margin: 0;
    font-size: 36.8px;
    font-weight: 400;
    color: #1f1f1f;
    white-space: nowrap;
}

.label-chip {
    height: 30px;
    margin-left: 17px;
    padding: 0 7px;
    border-radius: 4px;
    background-color: #dddddd;
    font-size: 20px;
    color: #444746;
    display: flex;
    align-items: center;
    gap: 8px;
}

.label-chip i {
    font-style: normal;
    font-size: 22px;
}

.subject-actions {
    margin-left: auto;
    display: flex;
    gap: 29px;
}

.msg-head {
    height: 79px;
    flex-shrink: 0;
    padding-left: 25px;
    padding-right: 53px;
    display: flex;
    align-items: flex-start;
}

.avatar-msg {
    width: 66px;
    height: 66px;
    font-size: 36px;
}

.msg-who {
    margin-left: 26px;
}

.sender {
    height: 30px;
    line-height: 30px;
    font-size: 23.8px;
    font-weight: 700;
    color: #1f1f1f;
}

.to-me {
    margin-top: 3px;
    height: 30px;
    display: flex;
    align-items: center;
    gap: 3px;
    font-size: 20px;
    color: #5e5e5e;
}

.msg-meta {
    margin-left: auto;
    display: flex;
    align-items: flex-start;
}

.msg-time {
    font-size: 19px;
    line-height: 30px;
    color: #5e5e5e;
    white-space: nowrap;
}

.msg-icons {
    margin-left: 34px;
    padding-top: 2px;
    display: flex;
    gap: 36px;
}

.msg-body {
    padding-left: 117px;
    font-family: "Liberation Sans", Arial, sans-serif;
    font-size: 21.33px;
    line-height: 31.9px;
    color: #222;
}

.msg-body p {
    margin: 0 0 31.9px;
}

.msg-body a {
    color: #1155cc;
}

.emoji {
    width: 26px;
    height: 26px;
    vertical-align: -6px;
}

.msg-buttons {
    margin-top: auto;
    padding-left: 117px;
    display: flex;
    gap: 13px;
}

.pill {
    width: 171px;
    height: 59px;
    padding-left: 30px;
    border: 1px solid #747775;
    border-radius: 30px;
    background-color: #fff;
    color: #444746;
    font-size: 24px;
    font-weight: 500;
    display: flex;
    align-items: center;
    gap: 14px;
}

.pill span {
    padding-bottom: 4px;
}

.pill-fwd {
    width: 182px;
    padding-left: 22px;
    gap: 13px;
}

.pill-round {
    width: 59px;
    padding-left: 0;
    justify-content: center;
}

.scroll-thumb {
    position: absolute;
    top: 78px;
    right: 0;
    width: 18px;
    height: 550px;
    background-color: #c9c9c9;
    border-left: 2px solid #b4b4b4;
}

/* right rail */
.rail {
    width: 91px;
    flex-shrink: 0;
    display: flex;
    flex-direction: column;
    align-items: center;
    padding-top: 29px;
    gap: 60px;
}

.rail-app {
    width: 32px;
    height: 32px;
    flex-shrink: 0;
}

.cal-num {
    font-family: "Open Sans", sans-serif;
    font-size: 13px;
    font-weight: 700;
    fill: #4285f4;
    text-anchor: middle;
}

.rail-divider {
    width: 32px;
    height: 1px;
    margin-top: -1px;
    margin-bottom: -1px;
    background-color: #e0e3e7;
}

.rail .ic-36 {
    margin-top: -4px;
}

.rail-toggle {
    margin-top: auto;
    margin-bottom: 28px;
}

/* taskbar */
.taskbar {
    height: 60px;
    flex-shrink: 0;
    display: flex;
    align-items: center;
    background-color: #1c1c1c;
    border-top: 1px solid #3a3a3a;
    color: #fff;
    font-family: "Open Sans", sans-serif;
    font-size: 14.5px;
}

.news {
    position: relative;
    width: 447px;
    height: 100%;
    padding-left: 64px;
    display: flex;
    align-items: center;
}

.f1 {
    position: absolute;
    left: 25px;
    top: 26px;
    width: 34px;
    height: 17px;
}

.news-badge {
    position: absolute;
    left: 38px;
    top: 6px;
    width: 20px;
    height: 20px;
    border-radius: 50%;
    background-color: #f4a6ac;
    color: #222;
    font-size: 13px;
    text-align: center;
    line-height: 20px;
}

.news-text {
    line-height: 20px;
}

.news-sub {
    color: #c8c8c8;
}

.win-logo {
    width: 30px;
    height: 30px;
    flex-shrink: 0;
}

.task-search {
    width: 275px;
    height: 40px;
    margin-left: 17px;
    padding-left: 12px;
    border-radius: 20px;
    background-color: #3b3b3b;
    display: flex;
    align-items: center;
    gap: 9px;
    font-size: 16.5px;
    color: #cfcfcf;
}

.task-search .ic {
    fill: #e8e8e8;
}

.tiles {
    margin-left: 1.5px;
    height: 100%;
    display: flex;
}

.tile {
    position: relative;
    width: 55px;
    height: 100%;
    display: flex;
    align-items: center;
    justify-content: center;
}

.tile svg {
    position: relative;
    width: 30px;
    height: 30px;
}

.tile .wa-ico {
    width: 32px;
    height: 32px;
}

.tile-open::after,
.tile-current::after {
    content: "";
    position: absolute;
    bottom: 5px;
    left: 23.5px;
    width: 8px;
    height: 3px;
    border-radius: 2px;
    background-color: #8d8d8d;
}

.tile-current::before {
    content: "";
    position: absolute;
    top: 4px;
    bottom: 4px;
    left: 2.5px;
    right: 2.5px;
    border-radius: 5px;
    background-color: #2d2d2d;
}

.tile-current::after {
    left: 17.5px;
    width: 20px;
    background-color: #5dcbd6;
}

.ico-letter {
    font-family: "Liberation Sans", sans-serif;
    font-size: 13px;
    font-weight: 700;
    fill: #fff;
    text-anchor: middle;
}

.tile-badge {
    position: absolute;
    top: 7px;
    left: 26px;
    width: 25px;
    height: 25px;
    border-radius: 50%;
    background-color: #6fd0dc;
    color: #10292d;
    font-size: 15px;
    text-align: center;
    line-height: 25px;
}

.chrome-ico {
    position: relative;
    width: 30px;
    height: 30px;
    border-radius: 50%;
    background: radial-gradient(circle, #4285f4 0 29%, #fff 30% 41%, transparent 42%), conic-gradient(#ea4335 0 90deg, #fbbc05 90deg 210deg, #34a853 210deg 300deg, #ea4335 300deg);
}

.chrome-badge {
    position: absolute;
    top: 8px;
    left: 28px;
    width: 20px;
    height: 20px;
    border-radius: 50%;
    background-color: #5d4037;
    color: #d9cfcb;
    font-size: 11px;
    text-align: center;
    line-height: 20px;
}

.chrome-badge-dark {
    background-color: #050505;
}

.tray {
    margin-left: auto;
    height: 100%;
    padding-right: 14px;
    display: flex;
    align-items: center;
}

.tray-up { margin-left: 6px; margin-right: 6px; }
.tray-cloud { margin-left: 11px; margin-right: 11px; }
.tray-mic { margin-left: 3px; margin-right: 3px; }
.tray-net { margin-left: 2px; margin-right: 2px; }
.tray-sound { margin-left: 3px; margin-right: 3px; }
.tray-batt { margin-left: 5px; margin-right: 5px; }
.tray-bell { margin-left: 8px; margin-right: 8px; }

.tray-lang {
    width: 64px;
    text-align: center;
    line-height: 20px;
}

.tray-clock {
    width: 91px;
    text-align: right;
    line-height: 20px;
}
```
